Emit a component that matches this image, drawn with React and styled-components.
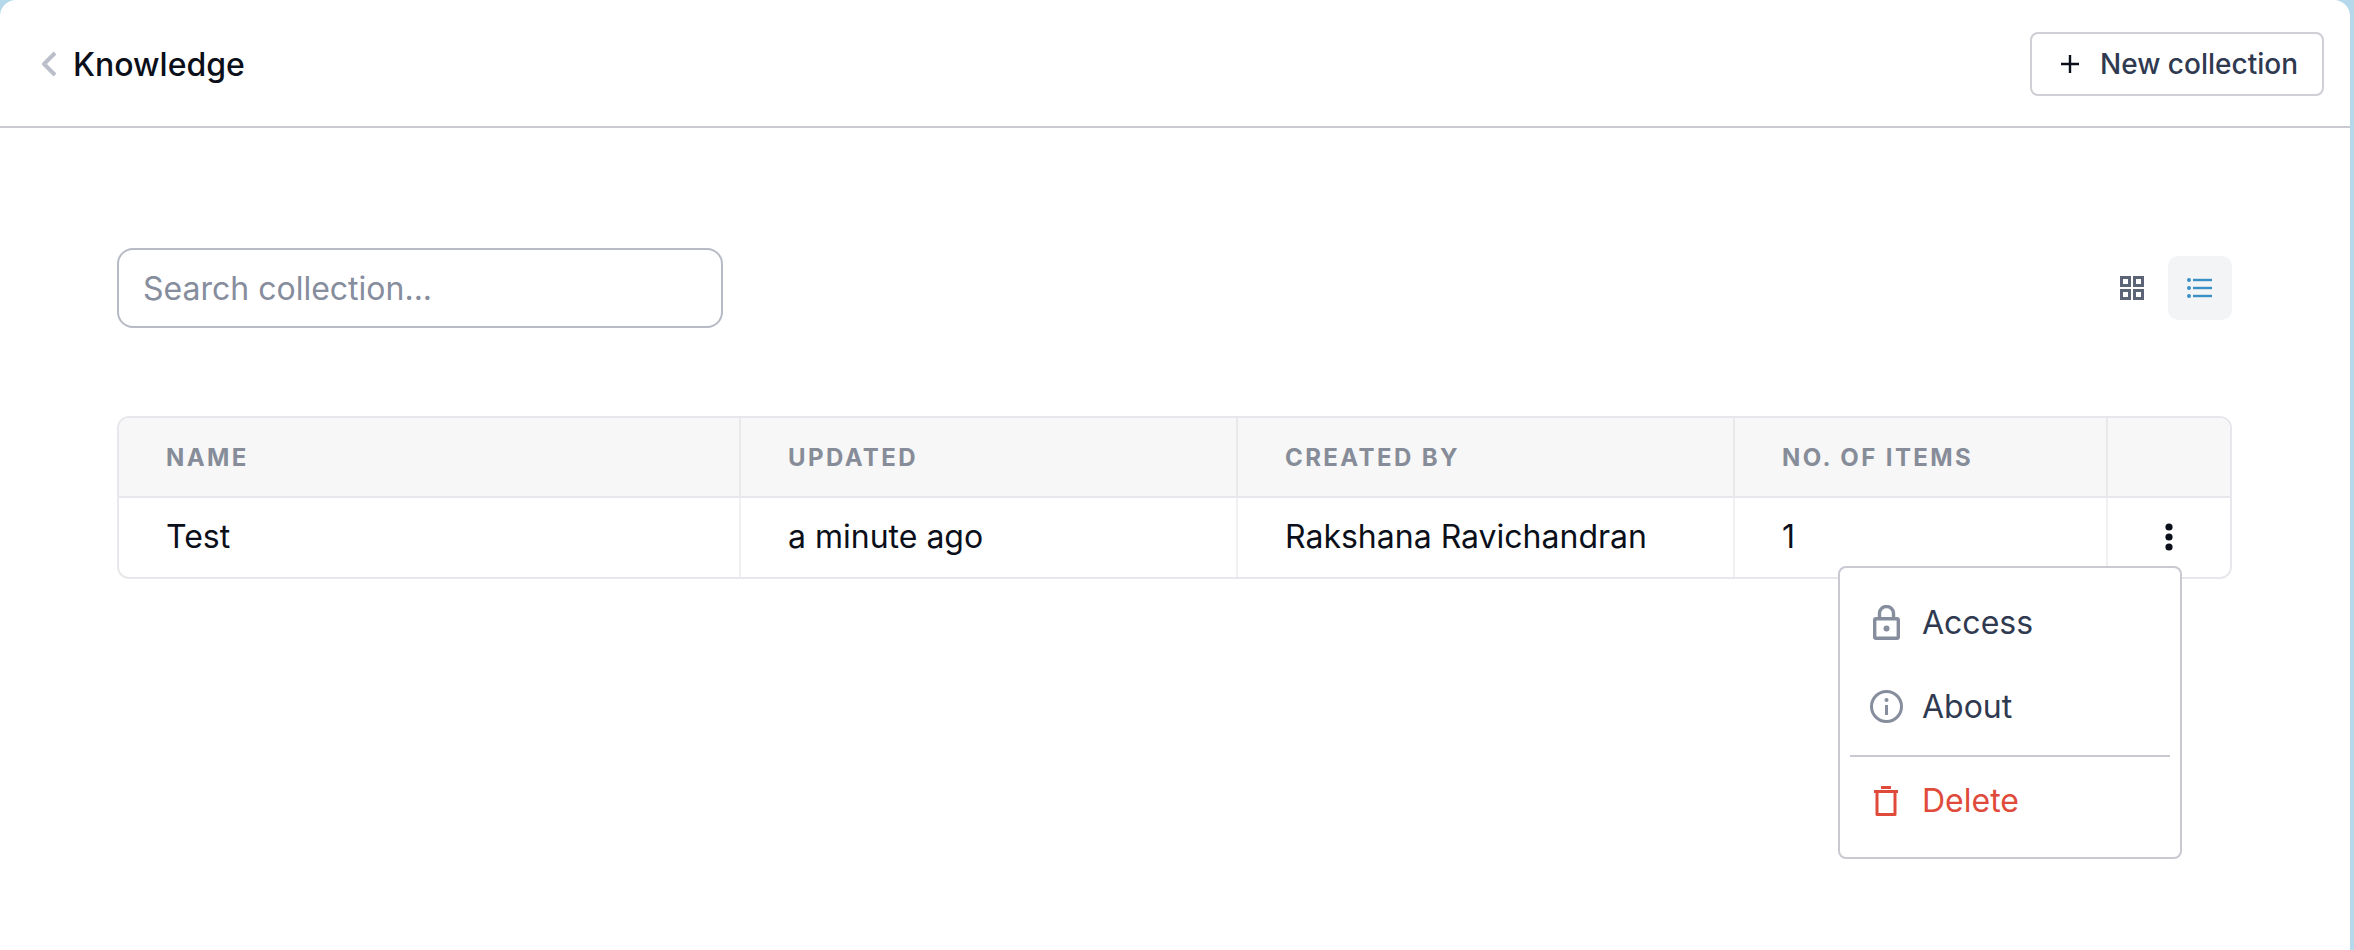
import React from "react";
import styled, { createGlobalStyle } from "styled-components";

const Global = createGlobalStyle`
  html, body { margin: 0; padding: 0; background: #b5d9ea; }
  body { font-family: Inter, "Noto Sans", sans-serif; -webkit-font-smoothing: antialiased; }
  * { box-sizing: border-box; }
`;

const Page = styled.div`
  width: 2350px;
  height: 950px;
  background: #ffffff;
  border-radius: 16px 16px 0 0;
  overflow: hidden;
`;

const Header = styled.header`
  height: 128px;
  border-bottom: 2px solid #c9c9d1;
  display: flex;
  align-items: center;
  justify-content: space-between;
  padding: 2px 26px 0 40px;
`;

const Crumb = styled.div`
  display: flex;
  align-items: center;
  gap: 15px;
`;

const Title = styled.h1`
  margin: 0;
  font-size: 32px;
  font-weight: 500;
  color: #0b0f1a;
  letter-spacing: 0;
`;

const NewButton = styled.button`
  width: 294px;
  height: 64px;
  border: 2px solid #cfcfd6;
  border-radius: 8px;
  background: #fff;
  display: flex;
  align-items: center;
  gap: 21px;
  padding: 0 0 0 29px;
  font: 500 28px Inter, sans-serif;
  color: #2f3a50;
`;

const Content = styled.main`
  padding: 120px 118px 0 117px;
  position: relative;
`;

const Toolbar = styled.div`
  display: flex;
  align-items: center;
  justify-content: space-between;
  height: 80px;
  margin-bottom: 88px;
`;

const SearchInput = styled.input`
  width: 606px;
  height: 80px;
  border: 2px solid #b8bac6;
  border-radius: 16px;
  padding: 0 24px;
  font: 400 32px Inter, sans-serif;
  color: #2f3a50;
  outline: none;
  &::placeholder { color: #868d9d; opacity: 1; }
`;

const Views = styled.div`
  display: flex;
  align-items: center;
  gap: 4px;
`;

const ViewButton = styled.div`
  width: 64px;
  height: 64px;
  border-radius: 10px;
  display: flex;
  align-items: center;
  justify-content: center;
  background: ${p => (p.$active ? "#f3f4f5" : "transparent")};
`;

const Table = styled.div`
  border: 2px solid #e8e8ec;
  border-radius: 12px;
  overflow: hidden;
  display: grid;
  grid-template-columns: 622px 497px 497px 373px 122px;
`;

const HeadCell = styled.div`
  height: 80px;
  background: #f7f7f7;
  border-bottom: 2px solid #e8e8ec;
  border-right: ${p => (p.$last ? "none" : "2px solid #e9e9ec")};
  display: flex;
  align-items: center;
  padding-left: ${p => p.$pad}px;
  font-size: 24px;
  font-weight: 700;
  letter-spacing: 2.4px;
  color: #878c99;
`;

const Cell = styled.div`
  height: 79px;
  border-right: ${p => (p.$last ? "none" : "2px solid #f0f0f2")};
  display: flex;
  align-items: center;
  justify-content: ${p => (p.$center ? "center" : "flex-start")};
  padding-left: ${p => p.$pad || 0}px;
  padding-bottom: 2px;
  font-size: 32px;
  font-weight: 400;
  color: #0b0f1a;
`;

const Menu = styled.div`
  position: absolute;
  left: 1838px;
  top: 438px;
  width: 344px;
  height: 293px;
  background: #fff;
  border: 2px solid #c9c9d1;
  border-radius: 8px;
  padding: 12px 10px 0;
`;

const MenuItem = styled.div`
  height: ${p => p.$h || 84}px;
  display: flex;
  align-items: center;
  padding-left: 19px;
  gap: 19px;
  font-size: 32px;
  font-weight: 400;
  color: ${p => (p.$danger ? "#e04a3a" : "#2f3a50")};
`;

const IconSlot = styled.span`
  width: 34px;
  height: 34px;
  display: flex;
  align-items: center;
  justify-content: center;
  flex: none;
`;

const Divider = styled.hr`
  margin: 7px 0 0;
  border: 0;
  border-top: 2px solid #c9c9d1;
`;

const Chevron = () => (
  <svg width="18" height="26" viewBox="0 0 18 26" fill="none">
    <path d="M15 2 L4 13 L15 24" stroke="#bcbec9" strokeWidth="4" strokeLinejoin="round" />
  </svg>
);
const Plus = () => (
  <svg width="18" height="18" viewBox="0 0 18 18">
    <path d="M9 0V18M0 9H18" stroke="#0b0f1a" strokeWidth="2.4" />
  </svg>
);
const GridIcon = () => (
  <svg width="24" height="24" viewBox="0 0 24 24" fill="none" stroke="#5c6478" strokeWidth="3">
    <rect x="1.5" y="1.5" width="8" height="8" />
    <rect x="14.5" y="1.5" width="8" height="8" />
    <rect x="1.5" y="14.5" width="8" height="8" />
    <rect x="14.5" y="14.5" width="8" height="8" />
  </svg>
);
const ListIcon = () => (
  <svg width="26" height="20" viewBox="0 0 26 20" fill="#3a8fc7">
    <circle cx="2" cy="2" r="2" />
    <circle cx="2" cy="10" r="2" />
    <circle cx="2" cy="18" r="2" />
    <rect x="6" y="0.8" width="19" height="2.4" />
    <rect x="6" y="8.8" width="19" height="2.4" />
    <rect x="6" y="16.8" width="19" height="2.4" />
  </svg>
);
const Dots = () => (
  <svg width="8" height="28" viewBox="0 0 8 28" fill="#0b0f1a">
    <circle cx="4" cy="4" r="3.6" />
    <circle cx="4" cy="14" r="3.6" />
    <circle cx="4" cy="24" r="3.6" />
  </svg>
);
const Lock = () => (
  <svg width="27" height="35" viewBox="0 0 27 35" fill="none" stroke="#868d9d" strokeWidth="3.4">
    <rect x="1.7" y="13.7" width="23.6" height="19.6" rx="1.5" />
    <path d="M6.5 13.5V8a7 6.5 0 0 1 14 0v5.5" />
    <circle cx="13.5" cy="23.5" r="3" fill="#868d9d" stroke="none" />
  </svg>
);
const Info = () => (
  <svg width="33" height="33" viewBox="0 0 33 33" fill="none" stroke="#868d9d" strokeWidth="3">
    <circle cx="16.5" cy="16.5" r="15" />
    <path d="M16.5 15v10" />
    <circle cx="16.5" cy="10" r="2" fill="#868d9d" stroke="none" />
  </svg>
);
const Trash = () => (
  <svg width="24" height="30" viewBox="0 0 24 30" fill="none" stroke="#e04a3a" strokeWidth="3">
    <path d="M0 5.5H24" />
    <path d="M7 1.5H17" />
    <path d="M3 5.5V28.5H21V5.5" strokeLinejoin="round" />
  </svg>
);

export default function App() {
  return (
    <>
      <Global />
      <Page>
        <Header>
          <Crumb>
            <Chevron />
            <Title>Knowledge</Title>
          </Crumb>
          <NewButton>
            <Plus />
            New collection
          </NewButton>
        </Header>
        <Content>
          <Toolbar>
            <SearchInput placeholder="Search collection..." />
            <Views>
              <ViewButton><GridIcon /></ViewButton>
              <ViewButton $active><ListIcon /></ViewButton>
            </Views>
          </Toolbar>
          <Table>
            <HeadCell $pad={47}>NAME</HeadCell>
            <HeadCell $pad={47}>UPDATED</HeadCell>
            <HeadCell $pad={47}>CREATED BY</HeadCell>
            <HeadCell $pad={47}>NO. OF ITEMS</HeadCell>
            <HeadCell $last />
            <Cell $pad={47}>Test</Cell>
            <Cell $pad={47}>a minute ago</Cell>
            <Cell $pad={47}>Rakshana Ravichandran</Cell>
            <Cell $pad={47}>1</Cell>
            <Cell $last $center><Dots /></Cell>
          </Table>
          <Menu>
            <MenuItem>
              <IconSlot><Lock /></IconSlot>
              Access
            </MenuItem>
            <MenuItem>
              <IconSlot><Info /></IconSlot>
              About
            </MenuItem>
            <Divider />
            <MenuItem $danger $h={87}>
              <IconSlot><Trash /></IconSlot>
              Delete
            </MenuItem>
          </Menu>
        </Content>
      </Page>
    </>
  );
}
